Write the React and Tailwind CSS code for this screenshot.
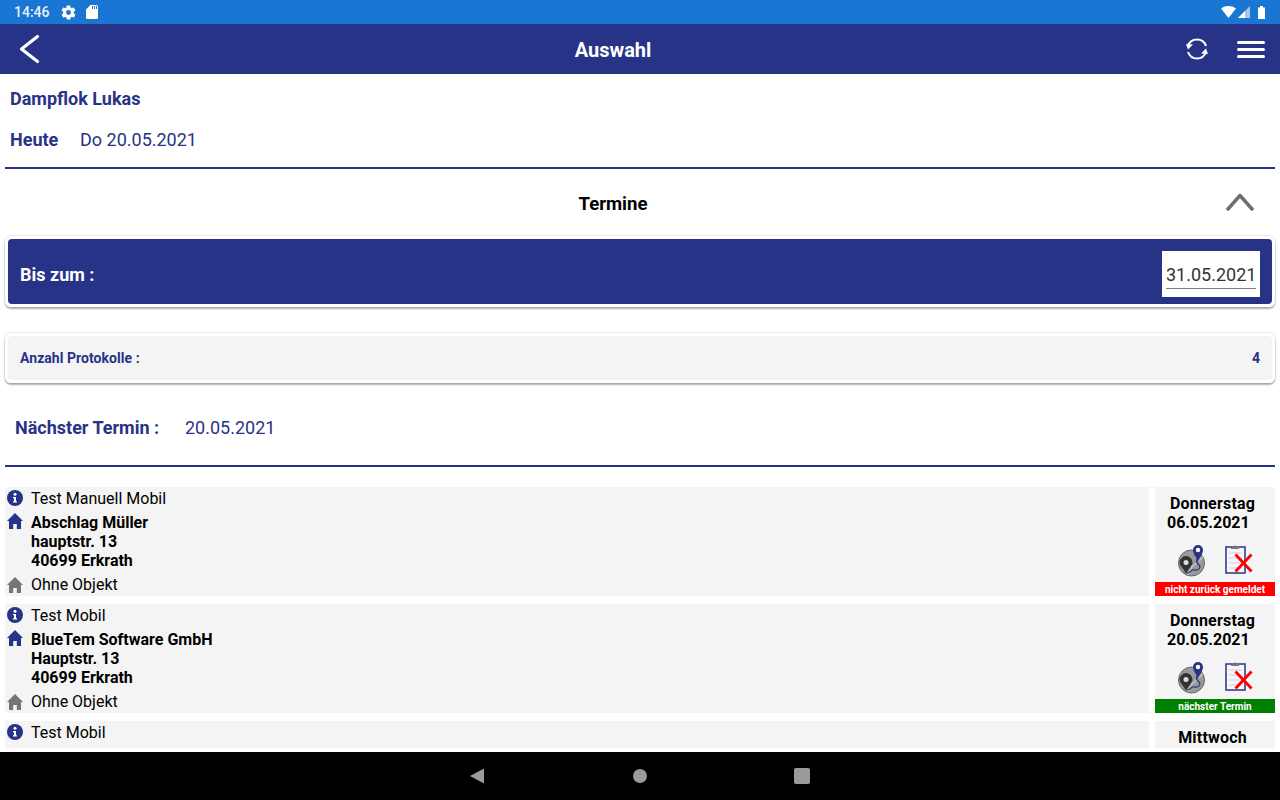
const TERMINE = [
  {
    id: 1,
    title: "Test Manuell Mobil",
    address: ["Abschlag Müller", "hauptstr. 13", "40699 Erkrath"],
    day: "Donnerstag",
    date: "06.05.2021",
    status: "nicht zurück gemeldet",
    statusColor: "bg-[#ff0000]",
  },
  {
    id: 2,
    title: "Test Mobil",
    address: ["BlueTem Software GmbH", "Hauptstr. 13", "40699 Erkrath"],
    day: "Donnerstag",
    date: "20.05.2021",
    status: "nächster Termin",
    statusColor: "bg-[#008000]",
  },
  // only the top of this one is on screen
  { id: 3, title: "Test Mobil", day: "Mittwoch" },
];

function GearIcon() {
  return (
    <svg width="17" height="17" viewBox="0 0 24 24" fill="#fff">
      <path d="M19.4 13c.04-.33.1-.66.1-1s-.06-.67-.1-1l2.1-1.65c.2-.15.25-.42.12-.64l-2-3.46c-.12-.22-.38-.3-.6-.22l-2.5 1c-.52-.4-1.08-.73-1.7-.98l-.37-2.65A.5.5 0 0 0 14 2h-4a.5.5 0 0 0-.5.42l-.37 2.65c-.62.25-1.18.58-1.7.98l-2.5-1a.5.5 0 0 0-.6.22l-2 3.46c-.13.22-.07.49.12.64L4.6 11c-.04.33-.1.66-.1 1s.06.67.1 1l-2.1 1.65c-.2.15-.25.42-.12.64l2 3.46c.12.22.38.3.6.22l2.5-1c.52.4 1.08.73 1.7.98l.37 2.65c.05.24.26.42.5.42h4c.25 0 .46-.18.5-.42l.37-2.65c.62-.25 1.18-.58 1.7-.98l2.5 1c.22.08.48 0 .6-.22l2-3.46c.13-.22.07-.49-.12-.64L19.4 13zM12 15.5a3.5 3.5 0 1 1 0-7 3.5 3.5 0 0 1 0 7z" />
    </svg>
  );
}

function SdIcon() {
  return (
    <svg width="12" height="14" viewBox="0 0 12 14" fill="#fff">
      <path d="M4.5 0H10.5A1.5 1.5 0 0 1 12 1.5V12.5A1.5 1.5 0 0 1 10.5 14H1.5A1.5 1.5 0 0 1 0 12.5V4.5ZM6 1V4H7V1ZM8 1V4H9V1ZM10 1V4H11V1Z" fillRule="evenodd" />
    </svg>
  );
}

function StatusBar() {
  return (
    <div className="h-6 bg-[#1976d2] flex items-center pl-[14px] pr-[15px] text-white">
      <span className="text-[14px] font-medium text-[#e8f1fb] w-[41px]">14:46</span>
      <div className="ml-[5px] flex"><GearIcon /></div>
      <div className="ml-[9px]"><SdIcon /></div>
      <div className="ml-auto flex items-center">
        <svg width="15" height="12" viewBox="0 0 15 12"><path d="M0 2.500C4.200-.8 10.800-.8 15 2.500L7.500 12Z" fill="#fff" /></svg>
        <svg width="12" height="12" viewBox="0 0 12 12" className="ml-[2px]">
          <path d="M0 12L12 0V12Z" fill="#a3c8ee" />
          <path d="M0 12L7 5V12Z" fill="#fff" />
        </svg>
        <svg width="7" height="13" viewBox="0 0 7 13" className="ml-[8px]"><path d="M2 0H5V1.500H7V13H0V1.500H2Z" fill="#fff" /></svg>
      </div>
    </div>
  );
}

function Header() {
  return (
    <div className="h-[50px] bg-[#273386] flex items-center relative">
      <svg width="24" height="32" viewBox="0 0 24 32" className="ml-[18px]">
        <path d="M19.500 3.500L3.500 16L19.500 28.500" fill="none" stroke="#fff" strokeWidth="3.200" strokeLinecap="round" strokeLinejoin="round" />
      </svg>
      <span className="absolute left-0 mt-[1px] w-[1226px] text-center text-white font-bold text-[20px]">Auswahl</span>
      <div className="ml-auto flex items-center gap-[28px] pr-[15px]">
        <svg width="24" height="26" viewBox="0 0 24 26" fill="none" stroke="#fff" strokeWidth="2">
          <path d="M3 10A9.500 9.500 0 0 1 21 10" />
          <path d="M21 16A9.500 9.500 0 0 1 3 16" />
          <path d="M1 8L8 8.500L3 13.500Z" fill="#fff" stroke="none" />
          <path d="M23 18L16 17.500L21 12.500Z" fill="#fff" stroke="none" />
        </svg>
        <div className="w-[28px] flex flex-col gap-[4px]">
          <div className="h-[3px] rounded-full bg-white" />
          <div className="h-[3px] rounded-full bg-white" />
          <div className="h-[3px] rounded-full bg-white" />
        </div>
      </div>
    </div>
  );
}

function InfoIcon() {
  return (
    <svg width="16" height="16" viewBox="0 0 16 16" className="-mt-[1px]">
      <circle cx="8" cy="8" r="8" fill="#273386" />
      <circle cx="8" cy="4.300" r="1.500" fill="#fff" />
      <path d="M6 7H9V11.200H10V12.500H6V11.200H7V8.300H6Z" fill="#fff" />
    </svg>
  );
}

function HouseIcon({ color }) {
  return (
    <svg width="16" height="16" viewBox="0 0 16 16">
      <path d="M8 0L16 8H14V16H9.800V11H6.200V16H2V8H0Z" fill={color} />
    </svg>
  );
}

function MapIcon() {
  return (
    <svg width="28" height="32" viewBox="0 0 28 32">
      <circle cx="13.500" cy="18" r="13" fill="#9a9a9a" stroke="#666" strokeWidth="1" />
      <path d="M3 12L14 22L25 12M10 30L14 22" stroke="#c4c4c4" strokeWidth="1.500" fill="none" />
      <path d="M9 28C14 28 12 24 16 25C21 26 24 22 20 19C18 17 18 16 19 14" stroke="#273386" strokeWidth="1.200" fill="none" />
      <path d="M8 11A6.500 6.500 0 0 1 14.500 17.500C14.500 21 10 24 8 29C6 24 1.500 21 1.500 17.500A6.500 6.500 0 0 1 8 11Z" fill="#333" />
      <circle cx="8" cy="17.500" r="2.500" fill="#ddd" />
      <path d="M20 0A5 5 0 0 1 25 5C25 9 21.500 12 20 17C18.500 12 15 9 15 5A5 5 0 0 1 20 0Z" fill="#273386" />
      <circle cx="20" cy="5" r="2.200" fill="#fff" />
    </svg>
  );
}

function ClipboardIcon() {
  return (
    <svg width="28" height="32" viewBox="0 0 28 32" className="-mt-[2px]">
      <rect x="1" y="4" width="19" height="26" fill="#f6f6fa" stroke="#273386" strokeWidth="1.500" />
      <path d="M4 10H17M4 15H17M4 20H17M4 25H17" stroke="#dcdce4" strokeWidth="1.500" />
      <path d="M6 6V3.500H8.500A2 2 0 0 1 12 3.500H14V6Z" fill="#777" />
      <path d="M10.500 11.500L26.500 28.500M26.500 11.500L10.500 28.500" stroke="#ff0000" strokeWidth="2.800" />
    </svg>
  );
}

function TerminRow({ termin }) {
  const full = !!termin.address;
  return (
    <div className={`flex gap-[6px] shrink-0 ${full ? "h-[109px] mb-[8px]" : "h-[27px]"}`}>
      <div className="flex-1 bg-[#f4f4f4] text-black text-[16px] leading-[19px]">
        <div className="flex items-center h-[23px]">
          <div className="w-[26px] pl-[2px]"><InfoIcon /></div>
          <span>{termin.title}</span>
        </div>
        {full && (
          <>
            <div className="flex mt-[3px]">
              <div className="w-[26px] pl-[2px]"><HouseIcon color="#273386" /></div>
              <div className="font-bold">
                {termin.address.map((line) => (
                  <div key={line}>{line}</div>
                ))}
              </div>
            </div>
            <div className="flex items-center mt-[3px] h-[23px]">
              <div className="w-[26px] pl-[2px]"><HouseIcon color="#757575" /></div>
              <span>Ohne Objekt</span>
            </div>
          </>
        )}
      </div>
      <div className="w-[120px] bg-[#f4f4f4] flex flex-col">
        <div className="pt-[7px] pr-[5px] text-center font-bold text-[16px] leading-[19px] tracking-[0.2px] text-black">{termin.day}</div>
        {full && (
          <>
            <div className="pl-[12px] font-bold text-[16px] leading-[19px] text-black">{termin.date}</div>
            <div className="flex items-start mt-[13px] pl-[23px] gap-[19px] h-[32px]">
              <MapIcon />
              <ClipboardIcon />
            </div>
            <div className={`mt-auto h-[14px] flex items-center justify-center text-white font-bold text-[10px] ${termin.statusColor}`}>
              {termin.status}
            </div>
          </>
        )}
      </div>
    </div>
  );
}

export default function App() {
  return (
    <div className="h-[800px] w-[1280px] flex flex-col overflow-hidden bg-white font-['Roboto',sans-serif]">
      <StatusBar />
      <Header />

      {/* Main Content */}
      <div className="flex-1 min-h-0 overflow-hidden px-[5px]">
        <div className="pl-[5px] pt-[14px] text-[18px] leading-[22px] font-bold text-[#273386]">Dampflok Lukas</div>
        <div className="flex items-center pl-[5px] mt-[18px] h-[22px] text-[18px] text-[#273386]">
          <span className="font-bold w-[70px]">Heute</span>
          <span>Do 20.05.2021</span>
        </div>
        <div className="h-[2px] bg-[#273386] mt-[17px]" />

        <div className="relative flex items-center justify-center h-[67px] pr-[54px] pt-[4px]">
          <span className="font-bold text-[18.6px] text-black">Termine</span>
          <svg width="30" height="20" viewBox="0 0 30 20" className="absolute right-[20px] top-[22px]">
            <path d="M3 18L15 4.500L27 18" fill="none" stroke="#6e6e6e" strokeWidth="3.500" strokeLinecap="round" strokeLinejoin="round" />
          </svg>
        </div>

        <div className="border-[3px] border-white rounded-[6px] shadow-[0_2px_2px_rgba(0,0,0,0.3),0_0_2px_rgba(0,0,0,0.25)]">
          <div className="h-[65px] bg-[#273386] rounded-[4px] flex items-center pt-[5px] px-[12px]">
            <span className="text-white font-bold text-[18px]">Bis zum :</span>
            <div className="ml-auto w-[98px] h-[46px] bg-white px-[4px] pt-[11px]">
              <div className="text-[18px] leading-[26px] text-[#333] border-b border-[#808080]">31.05.2021</div>
            </div>
          </div>
        </div>

        <div className="mt-[26px] border-[3px] border-white rounded-[6px] shadow-[0_2px_2px_rgba(0,0,0,0.3),0_0_2px_rgba(0,0,0,0.25)]">
          <div className="h-[44px] bg-[#f4f4f4] rounded-[4px] flex items-center justify-between px-[12px] text-[14px] tracking-[0.05px] font-bold text-[#273386]">
            <span>Anzahl Protokolle :</span>
            <span>4</span>
          </div>
        </div>

        <div className="flex items-center pl-[10px] mt-[33px] h-[22px] text-[18px] text-[#273386]">
          <span className="font-bold w-[170px]">Nächster Termin :</span>
          <span>20.05.2021</span>
        </div>
        <div className="h-[2px] bg-[#273386] mt-[27px] mb-[20px]" />

        <div className="flex flex-col">
          {TERMINE.map((t) => (
            <TerminRow key={t.id} termin={t} />
          ))}
        </div>
      </div>

      {/* Navigation Bar */}
      <div className="h-12 bg-black relative shrink-0">
        <svg width="16" height="16" viewBox="0 0 16 16" className="absolute left-[469px] top-[16px]"><path d="M1 8L15 0.500V15.500Z" fill="#9a9a9a" /></svg>
        <div className="absolute left-[633px] top-[17px] w-[14px] h-[14px] rounded-full bg-[#9a9a9a]" />
        <div className="absolute left-[794px] top-[16px] w-[16px] h-[16px] rounded-[2px] bg-[#9a9a9a]" />
      </div>
    </div>
  );
}
